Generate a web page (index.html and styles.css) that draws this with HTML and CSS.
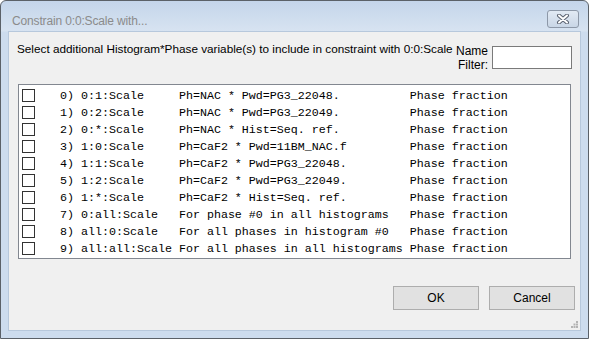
FILE: index.html
```html
<!DOCTYPE html>
<html lang="en">
<head>
  <meta charset="UTF-8">
  <title>Constrain 0:0:Scale with...</title>
  <link rel="stylesheet" href="styles.css">
</head>
<body>
  <div class="window">
    <div class="titlebar">
      <span class="title">Constrain 0:0:Scale with...</span>
      <button class="close-btn" aria-label="Close">
        <svg width="14" height="10" viewBox="0 0 14 10">
          <path d="M3 1.5 L11 8.5 M11 1.5 L3 8.5" stroke="#5a6270" stroke-width="4" stroke-linecap="round"/>
          <path d="M3 1.5 L11 8.5 M11 1.5 L3 8.5" stroke="#ffffff" stroke-width="2" stroke-linecap="round"/>
        </svg>
      </button>
    </div>
    <div class="client">
      <div class="dialog-header">
        <p class="prompt">Select additional Histogram*Phase variable(s) to include in constraint with 0:0:Scale</p>
        <label class="filter-label" for="name-filter">Name<br>Filter:</label>
        <input class="filter-input" id="name-filter" type="text">
      </div>
      <ul class="check-list">
        <li class="check-row"><span class="box"></span><span class="row-text">0) 0:1:Scale     Ph=NAC * Pwd=PG3_22048.          Phase fraction</span></li>
        <li class="check-row"><span class="box"></span><span class="row-text">1) 0:2:Scale     Ph=NAC * Pwd=PG3_22049.          Phase fraction</span></li>
        <li class="check-row"><span class="box"></span><span class="row-text">2) 0:*:Scale     Ph=NAC * Hist=Seq. ref.          Phase fraction</span></li>
        <li class="check-row"><span class="box"></span><span class="row-text">3) 1:0:Scale     Ph=CaF2 * Pwd=11BM_NAC.f         Phase fraction</span></li>
        <li class="check-row"><span class="box"></span><span class="row-text">4) 1:1:Scale     Ph=CaF2 * Pwd=PG3_22048.         Phase fraction</span></li>
        <li class="check-row"><span class="box"></span><span class="row-text">5) 1:2:Scale     Ph=CaF2 * Pwd=PG3_22049.         Phase fraction</span></li>
        <li class="check-row"><span class="box"></span><span class="row-text">6) 1:*:Scale     Ph=CaF2 * Hist=Seq. ref.         Phase fraction</span></li>
        <li class="check-row"><span class="box"></span><span class="row-text">7) 0:all:Scale   For phase #0 in all histograms   Phase fraction</span></li>
        <li class="check-row"><span class="box"></span><span class="row-text">8) all:0:Scale   For all phases in histogram #0   Phase fraction</span></li>
        <li class="check-row"><span class="box"></span><span class="row-text">9) all:all:Scale For all phases in all histograms Phase fraction</span></li>
      </ul>
      <div class="dialog-footer">
        <button class="btn">OK</button>
        <button class="btn">Cancel</button>
      </div>
      <svg class="grip" width="7" height="7" viewBox="0 0 7 7">
        <rect x="5" y="0" width="2" height="2" fill="#b3b3b3"/>
        <rect x="2.5" y="2.5" width="2" height="2" fill="#b3b3b3"/>
        <rect x="5" y="2.5" width="2" height="2" fill="#b3b3b3"/>
        <rect x="0" y="5" width="2" height="2" fill="#b3b3b3"/>
        <rect x="2.5" y="5" width="2" height="2" fill="#b3b3b3"/>
        <rect x="5" y="5" width="2" height="2" fill="#b3b3b3"/>
      </svg>
    </div>
  </div>
</body>
</html>
```

FILE: styles.css
```css
:root {
  --ui-font: "Liberation Sans", Arial, sans-serif;
  --mono-font: "Liberation Mono", "Courier New", monospace;
  --frame-color: #cddcee;
  --client-color: #f0f0f0;
  --border-dark: #5b6168;
}

html {
  box-sizing: border-box;
}

*,
*::before,
*::after {
  box-sizing: inherit;
}

body {
  margin: 0;
  background: #ffffff;
  font-family: var(--ui-font);
  font-size: 12px;
}

.window {
  width: 589px;
  height: 339px;
  display: flex;
  flex-direction: column;
  border: 1px solid var(--border-dark);
  border-radius: 6px 6px 0 0;
  background: linear-gradient(to bottom, #c4d5ea 0, #d7e3f1 30px, var(--frame-color) 31px);
}

.titlebar {
  height: 30px;
  display: flex;
  align-items: flex-start;
  justify-content: space-between;
  padding: 0 9px 0 11px;
}

.title {
  margin-top: 12px;
  color: #8b8b8b;
  font-size: 12px;
  letter-spacing: -0.15px;
  line-height: 16px;
}

.close-btn {
  margin-top: 9px;
  width: 32px;
  height: 18px;
  padding: 0;
  display: flex;
  align-items: center;
  justify-content: center;
  border: 1px solid #8d98a8;
  border-radius: 3px;
  background: linear-gradient(to bottom, #e2eaf4, #c9d6e6);
}

.client {
  position: relative;
  flex: 1;
  display: flex;
  flex-direction: column;
  margin: 0 7px 7px 7px;
  background: var(--client-color);
  border: 1px solid #b7c8dc;
}

.dialog-header {
  display: flex;
  align-items: flex-start;
  padding: 9px 8px 0 8px;
}

.prompt {
  flex: 1;
  min-width: 0;
  margin: 0;
  white-space: nowrap;
  font-size: 11.75px;
  line-height: 15px;
  color: #000000;
}

.filter-label {
  margin-top: 3px;
  line-height: 14px;
  text-align: right;
  color: #000000;
}

.filter-input {
  width: 80px;
  height: 23px;
  margin: 5px 0 0 4px;
  border: 1px solid #7a7a7a;
  background: #ffffff;
}

.check-list {
  list-style: none;
  height: 175px;
  margin: 12px 9px 0 9px;
  padding: 2px 0 0 0;
  border: 1px solid #828790;
  background: #ffffff;
}

.check-row {
  height: 17px;
  display: flex;
  align-items: center;
}

.box {
  width: 13px;
  height: 13px;
  margin-left: 3px;
  border: 1px solid #333333;
  background: #ffffff;
}

.row-text {
  margin-left: 25px;
  white-space: pre;
  font-family: var(--mono-font);
  font-size: 11.67px;
  color: #000000;
}

.dialog-footer {
  display: flex;
  justify-content: flex-end;
  gap: 10px;
  margin-top: 27px;
  padding-right: 5px;
}

.btn {
  width: 86px;
  height: 24px;
  padding: 0;
  border: 1px solid #adadad;
  background: #e1e1e1;
  font-family: var(--ui-font);
  font-size: 12px;
  color: #000000;
}

.grip {
  position: absolute;
  right: 2px;
  bottom: 2px;
}
```
